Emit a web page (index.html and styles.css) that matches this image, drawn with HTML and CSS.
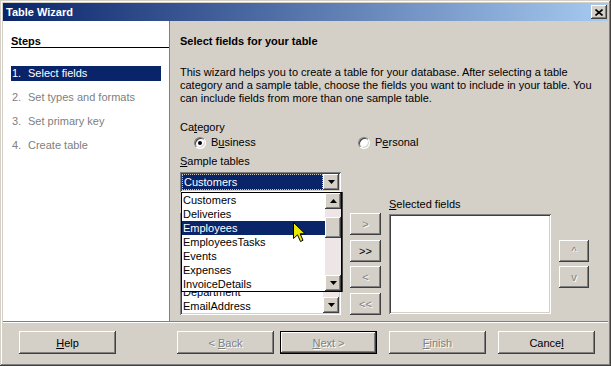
FILE: index.html
```html
<!DOCTYPE html>
<html lang="en">
<head>
    <meta charset="UTF-8">
    <meta name="viewport" content="width=device-width, initial-scale=1.0">
    <title>Table Wizard</title>
    <link rel="stylesheet" href="styles.css">
</head>
<body>
    <div class="window">
        <div class="titlebar">
            <span class="title">Table Wizard</span>
            <button class="close">
                <svg width="8" height="7" viewBox="0 0 8 7"><path d="M0.5 0.5 L7.5 6.5 M7.5 0.5 L0.5 6.5" stroke="#000" stroke-width="1.6" fill="none"/></svg>
            </button>
        </div>

        <div class="main">
            <!-- left: wizard steps -->
            <div class="steps">
                <div class="steps_head">Steps</div>
                <ul class="step_list">
                    <li class="active"><span class="num">1.</span>Select fields</li>
                    <li><span class="num">2.</span>Set types and formats</li>
                    <li><span class="num">3.</span>Set primary key</li>
                    <li><span class="num">4.</span>Create table</li>
                </ul>
            </div>

            <!-- right: page content -->
            <div class="content">
                <div class="heading">Select fields for your table</div>
                <p class="intro">This wizard helps you to create a table for your database. After selecting a table category and a sample table, choose the fields you want to include in your table. You can include fields from more than one sample table.</p>

                <div class="label category">Ca<u>t</u>egory</div>
                <div class="radios">
                    <div class="radio business"><span class="dot on"></span>B<u>u</u>siness</div>
                    <div class="radio"><span class="dot"></span>P<u>e</u>rsonal</div>
                </div>

                <div class="label sample"><u>S</u>ample tables</div>
                <div class="combo">
                    <div class="combo_value"><span>Customers</span></div>
                    <div class="raised sb_btn"><svg width="7" height="4"><polygon points="0,0 7,0 3.5,4" fill="#000"/></svg></div>

                    <div class="popup">
                        <ul class="popup_list">
                            <li>Customers</li>
                            <li>Deliveries</li>
                            <li class="sel">Employees</li>
                            <li>EmployeesTasks</li>
                            <li>Events</li>
                            <li>Expenses</li>
                            <li>InvoiceDetails</li>
                        </ul>
                        <div class="scrollbar">
                            <div class="raised sb_btn"><svg width="7" height="4"><polygon points="3.5,0 7,4 0,4" fill="#000"/></svg></div>
                            <div class="sb_track"><div class="raised sb_thumb"></div></div>
                            <div class="raised sb_btn"><svg width="7" height="4"><polygon points="0,0 7,0 3.5,4" fill="#000"/></svg></div>
                        </div>
                    </div>
                </div>

                <div class="fields_row">
                    <div class="listbox available">
                        <!-- only the rows below the open dropdown are visible -->
                        <ul class="field_list">
                            <li>Department</li>
                            <li>EmailAddress</li>
                        </ul>
                        <div class="scrollbar">
                            <div class="raised sb_btn"><svg width="7" height="4"><polygon points="3.5,0 7,4 0,4" fill="#000"/></svg></div>
                            <div class="sb_track"></div>
                            <div class="raised sb_btn"><svg width="7" height="4"><polygon points="0,0 7,0 3.5,4" fill="#000"/></svg></div>
                        </div>
                    </div>

                    <div class="transfer">
                        <button class="btn off">&gt;</button>
                        <button class="btn">&gt;&gt;</button>
                        <button class="btn off">&lt;</button>
                        <button class="btn off">&lt;&lt;</button>
                    </div>

                    <div class="selected_col">
                        <div class="label"><u>S</u>elected fields</div>
                        <div class="listbox selected"></div>
                    </div>

                    <div class="order">
                        <button class="btn off">^</button>
                        <button class="btn off">v</button>
                    </div>
                </div>

                <!-- mouse pointer over the dropdown -->
                <svg class="cursor" width="14" height="21" viewBox="0 0 14 21">
                    <path d="M0.5 0.5 L0.5 16.5 L4.5 12.8 L7.5 19.5 L10 18.3 L7.2 11.8 L12.2 11.8 Z" fill="#e8e800" stroke="#000" stroke-width="1"/>
                </svg>
            </div>
        </div>

        <div class="footer">
            <button class="btn wide help"><u>H</u>elp</button>
            <button class="btn wide off">&lt; <u>B</u>ack</button>
            <button class="btn wide off default next"><u>N</u>ext &gt;</button>
            <button class="btn wide off gap"><u>F</u>inish</button>
            <button class="btn wide gap">Cance<u>l</u></button>
        </div>
    </div>
</body>
</html>
```

FILE: styles.css
```css
*{
    margin: 0px;
    padding: 0px;
    box-sizing: border-box;
}
body{
    font-family: "Liberation Sans", Arial, sans-serif;
    font-size: 11px;
    color: #000;
    background: #d4d0c8;
}
ul{
    list-style: none;
}

/* classic 3d borders */
.raised,
.btn,
.close{
    background: #d4d0c8;
    box-shadow: inset -1px -1px #404040, inset 1px 1px #fff, inset -2px -2px #808080, inset 2px 2px #d4d0c8;
}

.window{
    width: 611px;
    height: 366px;
    padding: 3px;
    display: flex;
    flex-direction: column;
    background: #d4d0c8;
    box-shadow: inset -1px -1px #404040, inset 1px 1px #d4d0c8, inset -2px -2px #808080, inset 2px 2px #fff;
}

.titlebar{
    height: 18px;
    flex-shrink: 0;
    display: flex;
    align-items: center;
    justify-content: space-between;
    padding: 0 1px 0 3px;
    background: linear-gradient(to right, #0a246a, #a6caf0);
}
.title{
    color: #fff;
    font-weight: bold;
    line-height: 18px;
}
.close{
    width: 16px;
    height: 14px;
    border: none;
    display: flex;
    align-items: center;
    justify-content: center;
}

.main{
    height: 300px;
    display: flex;
}

/* steps panel */
.steps{
    width: 167px;
    background: #fff;
    border-right: 1px solid #808080;
}
.steps_head{
    margin: 15px 0 0 8px;
    line-height: 11px;
    font-weight: bold;
    border-bottom: 1px solid #000;
}
.step_list{
    margin: 18px 8px 0 8px;
}
.step_list>li{
    display: flex;
    height: 15px;
    line-height: 15px;
    margin-bottom: 9px;
    color: #808080;
}
.step_list>li.active{
    background: #0a246a;
    color: #fff;
}
.num{
    width: 17px;
    padding-left: 1px;
}

/* content */
.content{
    flex: 1;
    position: relative;
    padding: 14px 0 0 10px;
}
.heading{
    font-weight: bold;
    line-height: 13px;
}
.intro{
    margin-top: 18px;
    line-height: 13px;
    padding-right: 4px;
}
.label{
    line-height: 13px;
}
.category{
    margin-top: 16px;
}
.radios{
    display: flex;
    margin-top: 2px;
    padding-left: 14px;
    line-height: 13px;
}
.radio{
    display: flex;
    align-items: center;
}
.business{
    width: 164px;
}
.dot{
    width: 12px;
    height: 12px;
    margin-right: 5px;
    border-radius: 50%;
    background: #fff;
    border: 1px solid;
    border-color: #808080 #fff #fff #808080;
    box-shadow: inset 1px 1px #404040, inset -1px -1px #d4d0c8;
    display: flex;
    align-items: center;
    justify-content: center;
}
.dot.on::after{
    content: "";
    width: 4px;
    height: 4px;
    border-radius: 50%;
    background: #000;
}
.sample{
    margin-top: 6px;
}

/* sunken fields */
.combo,
.listbox{
    background: #fff;
    padding: 2px;
    box-shadow: inset 1px 1px #808080, inset -1px -1px #fff, inset 2px 2px #404040, inset -2px -2px #d4d0c8;
}
.combo{
    position: relative;
    width: 161px;
    height: 20px;
    margin-top: 4px;
    display: flex;
}
.combo_value{
    flex: 1;
    background: #0a246a;
    color: #fff;
    border: 1px dotted #c8c8c8;
    line-height: 14px;
    padding-left: 1px;
}
.sb_btn{
    width: 16px;
    height: 16px;
    flex-shrink: 0;
    display: flex;
    align-items: center;
    justify-content: center;
}

.popup{
    position: absolute;
    left: 1px;
    top: 20px;
    width: 161px;
    height: 100px;
    display: flex;
    background: #fff;
    border: 1px solid #000;
    box-shadow: 1px 0 #404040;
    z-index: 2;
}
.popup_list{
    flex: 1;
}
.field_list{
    flex: 1;
    display: flex;
    flex-direction: column;
    justify-content: flex-end;
}
.popup_list>li,
.field_list>li{
    height: 14px;
    line-height: 14px;
    padding-left: 1px;
    white-space: nowrap;
}
.popup_list>li.sel{
    background: #0a246a;
    color: #fff;
}
.scrollbar{
    width: 16px;
    display: flex;
    flex-direction: column;
    background: #eee6e6;
}
.sb_track{
    flex: 1;
    padding-top: 8px;
}
.sb_thumb{
    height: 21px;
}

.fields_row{
    display: flex;
    align-items: flex-start;
    margin-top: 6px;
}
.available{
    width: 161px;
    height: 102px;
    margin-top: 15px;
    display: flex;
    overflow: hidden;
}
.transfer{
    width: 31px;
    height: 102px;
    margin: 15px 0 0 9px;
    display: flex;
    flex-direction: column;
    justify-content: space-between;
}
.btn{
    border: none;
    font: inherit;
    font-size: 11px;
    color: #000;
    height: 22px;
}
.btn.off{
    color: #808080;
    text-shadow: 1px 1px #fff;
}
.selected_col{
    width: 162px;
    margin-left: 8px;
}
.selected{
    height: 100px;
    margin-top: 3px;
}
.order{
    width: 30px;
    margin: 42px 0 0 8px;
    display: flex;
    flex-direction: column;
    gap: 4px;
}

.cursor{
    position: absolute;
    left: 123px;
    top: 201px;
    z-index: 3;
}

/* bottom buttons */
.footer{
    height: 42px;
    flex-shrink: 0;
    display: flex;
    align-items: flex-start;
    padding: 9px 13px 0 16px;
    border-top: 1px solid #808080;
    box-shadow: inset 0 1px #fff;
}
.btn.wide{
    width: 97px;
    height: 23px;
}
.help{
    margin-right: auto;
}
.next{
    margin-left: 6px;
}
.gap{
    margin-left: 12px;
}
.btn.default{
    box-shadow: inset 0 0 0 1px #000, inset -2px -2px #404040, inset 2px 2px #fff, inset -3px -3px #808080, inset 3px 3px #d4d0c8;
}
```
